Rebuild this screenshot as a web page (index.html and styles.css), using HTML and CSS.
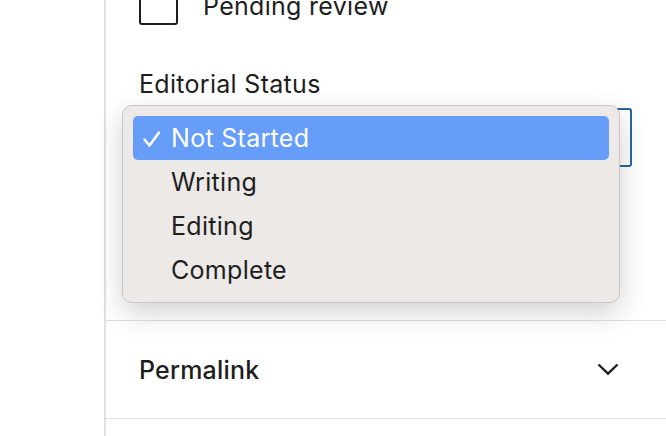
FILE: index.html
```html
<!DOCTYPE html>
<html lang="en">
<head>
    <meta charset="UTF-8">
    <meta name="viewport" content="width=device-width, initial-scale=1.0">
    <title>Post settings</title>
    <link rel="stylesheet" href="styles.css">
</head>
<body>
    <!-- sidebar of the post editor -->
    <aside class="sidebar">
        <div class="panel status-panel">
            <label class="check-row">
                <span class="checkbox"></span>
                <span class="check-label">Pending review</span>
            </label>

            <div class="field">
                <div class="field-label">Editorial Status</div>
                <div class="select-box"></div>

                <!-- open dropdown list -->
                <ul class="select-menu">
                    <li class="menu-item selected">
                        <svg class="tick" width="20" height="18" viewBox="0 0 20 18">
                            <path d="M2.5 9.5 7.5 15.5 17 2.5" fill="none" stroke="#fff" stroke-width="2.4" stroke-linecap="round" stroke-linejoin="round"/>
                        </svg>Not Started
                    </li>
                    <li class="menu-item">Writing</li>
                    <li class="menu-item">Editing</li>
                    <li class="menu-item">Complete</li>
                </ul>
            </div>
        </div>

        <div class="panel toggle-panel">
            <span class="panel-title">Permalink</span>
            <svg class="chevron" width="24" height="24" viewBox="0 0 24 24">
                <path d="M2.5 6.5 12 15.5 21.5 6.5" fill="none" stroke="#1e1e1e" stroke-width="2.4"/>
            </svg>
        </div>

        <div class="panel next-panel"></div>
    </aside>
</body>
</html>
```

FILE: styles.css
```css
/* page and sidebar frame */
body {
    margin: 0;
    background: #fff;
    font-family: Inter, "Noto Sans", sans-serif;
    color: #1e1e1e;
    overflow: hidden;
}
.sidebar {
    margin-left: 104px;
    border-left: 2px solid #e0e0e0;
    height: 100vh;
}
.panel {
    display: flow-root;
    padding: 0 34px 0 33px;
    border-bottom: 1px solid #e0e0e0;
}

/* status panel */
.status-panel {
    height: 321px;
    box-sizing: border-box;
}
.check-row {
    display: flex;
    align-items: center;
    gap: 25px;
    margin-top: -14px;
}
.checkbox {
    width: 35px;
    height: 35px;
    border: 2px solid #1e1e1e;
    border-radius: 3px;
}
.check-label {
    font-size: 25px;
    letter-spacing: 0.3px;
}

.field {
    position: relative;
    margin-top: 44px;
}
.field-label {
    font-size: 25px;
    letter-spacing: 0.3px;
    line-height: 30px;
}
.select-box {
    margin-top: 9px;
    height: 55px;
    border: 2px solid #2a67a0;
    border-radius: 3px;
}

/* native-looking popup list */
.select-menu {
    position: absolute;
    left: -17px;
    top: 36px;
    width: 476px;
    margin: 0;
    padding: 10px 10px;
    list-style: none;
    background: #ece9e6;
    border: 1px solid #c9c6c3;
    border-radius: 10px;
    box-shadow: 0 10px 28px rgba(0, 0, 0, 0.18);
}
.menu-item {
    height: 44px;
    line-height: 44px;
    padding-left: 38px;
    font-size: 25px;
    letter-spacing: 0.3px;
    position: relative;
}
.menu-item.selected {
    background: #659df8;
    color: #fff;
    border-radius: 5px;
}
.tick {
    position: absolute;
    left: 9px;
    top: 14px;
}

/* collapsed panel */
.toggle-panel {
    height: 98px;
    box-sizing: border-box;
    display: flex;
    align-items: center;
    justify-content: space-between;
}
.panel-title {
    font-size: 25px;
    font-weight: 500;
    letter-spacing: 0.2px;
}
.chevron {
    margin-right: 12px;
}
.next-panel {
    border-bottom: none;
}
```
